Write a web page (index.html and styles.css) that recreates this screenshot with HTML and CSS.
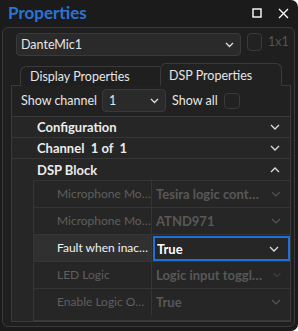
FILE: index.html
```html
<!DOCTYPE html>
<html>
<head>
	<link rel="stylesheet" href="styles.css">
</head>
<body>
<div class="window">
	<div class="titlebar">
		<span class="title">Properties</span>
		<span class="controls">
			<svg width="10" height="10" viewBox="0 0 10 10"><rect x="1" y="1" width="8" height="8" fill="none" stroke="#fff" stroke-width="1.4"/></svg>
			<svg width="11" height="11" viewBox="0 0 11 11"><path d="M1 1 L10 10 M10 1 L1 10" stroke="#fff" stroke-width="1.3"/></svg>
		</span>
	</div>

	<div class="frame">
		<div class="object-row">
			<div class="select object-select">
				<span>DanteMic1</span>
				<svg class="chev" width="9" height="6" viewBox="0 0 9 6"><path d="M1 1 L4.5 4.5 L8 1" fill="none" stroke="#ddd" stroke-width="1.3"/></svg>
			</div>
			<span class="checkbox"></span>
			<span class="dim">1x1</span>
		</div>

		<div class="tabs">
			<div class="tab">Display Properties</div>
			<div class="tab active">DSP Properties</div>
		</div>

		<div class="tab-body">
			<div class="channel-row">
				<span>Show channel</span>
				<div class="select channel-select">
					<span>1</span>
					<svg class="chev" width="9" height="6" viewBox="0 0 9 6"><path d="M1 1 L4.5 4.5 L8 1" fill="none" stroke="#ddd" stroke-width="1.3"/></svg>
				</div>
				<span>Show all</span>
				<span class="checkbox small"></span>
			</div>

			<div class="grid">
				<div class="cat">
					<span>Configuration</span>
					<svg class="chev" width="10" height="6" viewBox="0 0 10 6"><path d="M1 1 L5 5 L9 1" fill="none" stroke="#ddd" stroke-width="1.3"/></svg>
				</div>
				<div class="cat">
					<span>Channel&nbsp; 1 of &nbsp;1</span>
					<svg class="chev" width="10" height="6" viewBox="0 0 10 6"><path d="M1 1 L5 5 L9 1" fill="none" stroke="#ddd" stroke-width="1.3"/></svg>
				</div>
				<div class="cat">
					<span>DSP Block</span>
					<svg class="chev" width="10" height="6" viewBox="0 0 10 6"><path d="M1 5 L5 1 L9 5" fill="none" stroke="#ddd" stroke-width="1.3"/></svg>
				</div>
				<div class="props">
					<div class="prop disabled">
						<span class="name">Microphone Mode</span>
						<span class="value"><span class="text">Tesira logic control</span><svg class="chev" width="10" height="6" viewBox="0 0 10 6"><path d="M1 1 L5 5 L9 1" fill="none" stroke="#555" stroke-width="1.2"/></svg></span>
					</div>
					<div class="prop disabled">
						<span class="name">Microphone Model</span>
						<span class="value"><span class="text">ATND971</span><svg class="chev" width="10" height="6" viewBox="0 0 10 6"><path d="M1 1 L5 5 L9 1" fill="none" stroke="#555" stroke-width="1.2"/></svg></span>
					</div>
					<div class="prop selected">
						<span class="name">Fault when inactive</span>
						<span class="value"><span class="text">True</span><svg class="chev" width="10" height="6" viewBox="0 0 10 6"><path d="M1 1 L5 5 L9 1" fill="none" stroke="#ddd" stroke-width="1.3"/></svg></span>
					</div>
					<div class="prop disabled">
						<span class="name">LED Logic</span>
						<span class="value"><span class="text">Logic input toggles LED</span><svg class="chev" width="10" height="6" viewBox="0 0 10 6"><path d="M1 1 L5 5 L9 1" fill="none" stroke="#555" stroke-width="1.2"/></svg></span>
					</div>
					<div class="prop disabled">
						<span class="name">Enable Logic Output</span>
						<span class="value"><span class="text">True</span><svg class="chev" width="10" height="6" viewBox="0 0 10 6"><path d="M1 1 L5 5 L9 1" fill="none" stroke="#555" stroke-width="1.2"/></svg></span>
					</div>
				</div>
			</div>
		</div>
	</div>
</div>
</body>
</html>
```

FILE: styles.css
```css
html, body {
	margin: 0;
	background: #ffffff;
}

body {
	font-family: Lato, "Liberation Sans", sans-serif;
	font-size: 12.5px;
	color: #e6e6e6;
}

.window {
	width: 298px;
	height: 331px;
	background: #1b1b1b;
	border-radius: 0 7px 7px 0;
	box-sizing: border-box;
	display: flex;
	flex-direction: column;
	overflow: hidden;
}

.titlebar {
	height: 27px;
	display: flex;
	align-items: center;
	justify-content: space-between;
	padding: 0 9px 0 8px;
	flex-shrink: 0;
}

.title {
	color: #2a73d8;
	font-weight: bold;
	font-size: 17px;
	margin-top: -2px;
}

.controls {
	display: flex;
	gap: 16px;
	align-items: center;
	margin-top: -1px;
}

.frame {
	margin: 0 3px 4px 2px;
	flex: 1;
	border: 1px solid #3a3a3a;
	border-radius: 6px;
	background: #1f1f1f;
	display: flex;
	flex-direction: column;
}

.object-row {
	display: flex;
	align-items: flex-start;
	padding: 5px 0 0 13px;
	gap: 6px;
}

.select {
	box-sizing: border-box;
	height: 23px;
	border: 1px solid #3a3a3a;
	border-radius: 4px;
	background: #2a2a2a;
	display: flex;
	align-items: center;
	justify-content: space-between;
	padding: 0 6px 0 4px;
}

.object-select {
	width: 225px;
}

.checkbox {
	box-sizing: border-box;
	width: 15px;
	height: 18px;
	border: 1px solid #3a3a3a;
	border-radius: 4px;
	background: #222;
}

.checkbox.small {
	height: 16px;
	width: 16px;
}

.dim {
	color: #555;
	line-height: 18px;
}

.tabs {
	display: flex;
	align-items: flex-end;
	padding-left: 17px;
	margin-top: 7px;
	height: 23px;
	position: relative;
	z-index: 1;
	margin-bottom: -1px;
}

.tab {
	box-sizing: border-box;
	border: 1px solid #3a3a3a;
	border-bottom: none;
	border-radius: 6px 6px 0 0;
	height: 20px;
	padding: 2px 0 0 9px;
	background: #1f1f1f;
}

.tab:first-child {
	width: 140px;
	border-right: none;
	border-radius: 6px 0 0 0;
}

.tab.active {
	width: 122px;
	height: 23px;
	padding: 4px 0 0 8px;
	background: #212121;
	border-bottom: 1px solid #212121;
}

.tab-body {
	flex: 1;
	margin: 0 3px 4px 8px;
	border: 1px solid #3a3a3a;
	background: #212121;
	display: flex;
	flex-direction: column;
}

.channel-row {
	display: flex;
	align-items: center;
	height: 23px;
	margin-top: 3px;
	padding-left: 9px;
}

.channel-select {
	width: 64px;
	margin: 0 6px 0 5px;
	padding-left: 6px;
}

.channel-row .checkbox {
	margin-left: 6px;
}

.grid {
	margin-top: 4px;
	border-top: 1px solid #3a3a3a;
	background: #262626;
	flex: 1;
	display: flex;
	flex-direction: column;
}

.cat {
	box-sizing: border-box;
	height: 21px;
	border-bottom: 1px solid #353535;
	display: flex;
	align-items: center;
	justify-content: space-between;
	padding: 0 10px 0 25px;
	font-weight: bold;
	font-size: 13px;
	color: #ececec;
}

.cat:nth-child(3) {
	border-bottom: none;
}

.props {
	margin-left: 21px;
	border-left: 1px solid #353535;
	border-bottom: 1px solid #3a3a3a;
	flex: 1;
}

.prop {
	box-sizing: border-box;
	height: 27px;
	border-top: 1px solid #353535;
	display: flex;
}

.name {
	box-sizing: border-box;
	width: 118px;
	padding-left: 23px;
	border-right: 1px solid #353535;
	line-height: 26px;
	font-size: 12px;
	white-space: nowrap;
	overflow: hidden;
	text-overflow: ellipsis;
}

.value {
	flex: 1;
	min-width: 0;
	display: flex;
	align-items: center;
	justify-content: space-between;
	padding: 0 9px 0 4px;
	font-weight: bold;
	font-size: 13px;
}

.value .text {
	white-space: nowrap;
	overflow: hidden;
	text-overflow: ellipsis;
	margin-right: 10px;
}

.disabled .name {
	color: #5f5f5f;
}

.disabled .value {
	color: #585858;
}

.selected .name {
	background: #303030;
	color: #f2f2f2;
}

.selected .value {
	box-sizing: border-box;
	border: 2px solid #1f6fd8;
	margin: 1px 0 0 1px;
	padding-left: 2px;
	color: #fff;
}
```
